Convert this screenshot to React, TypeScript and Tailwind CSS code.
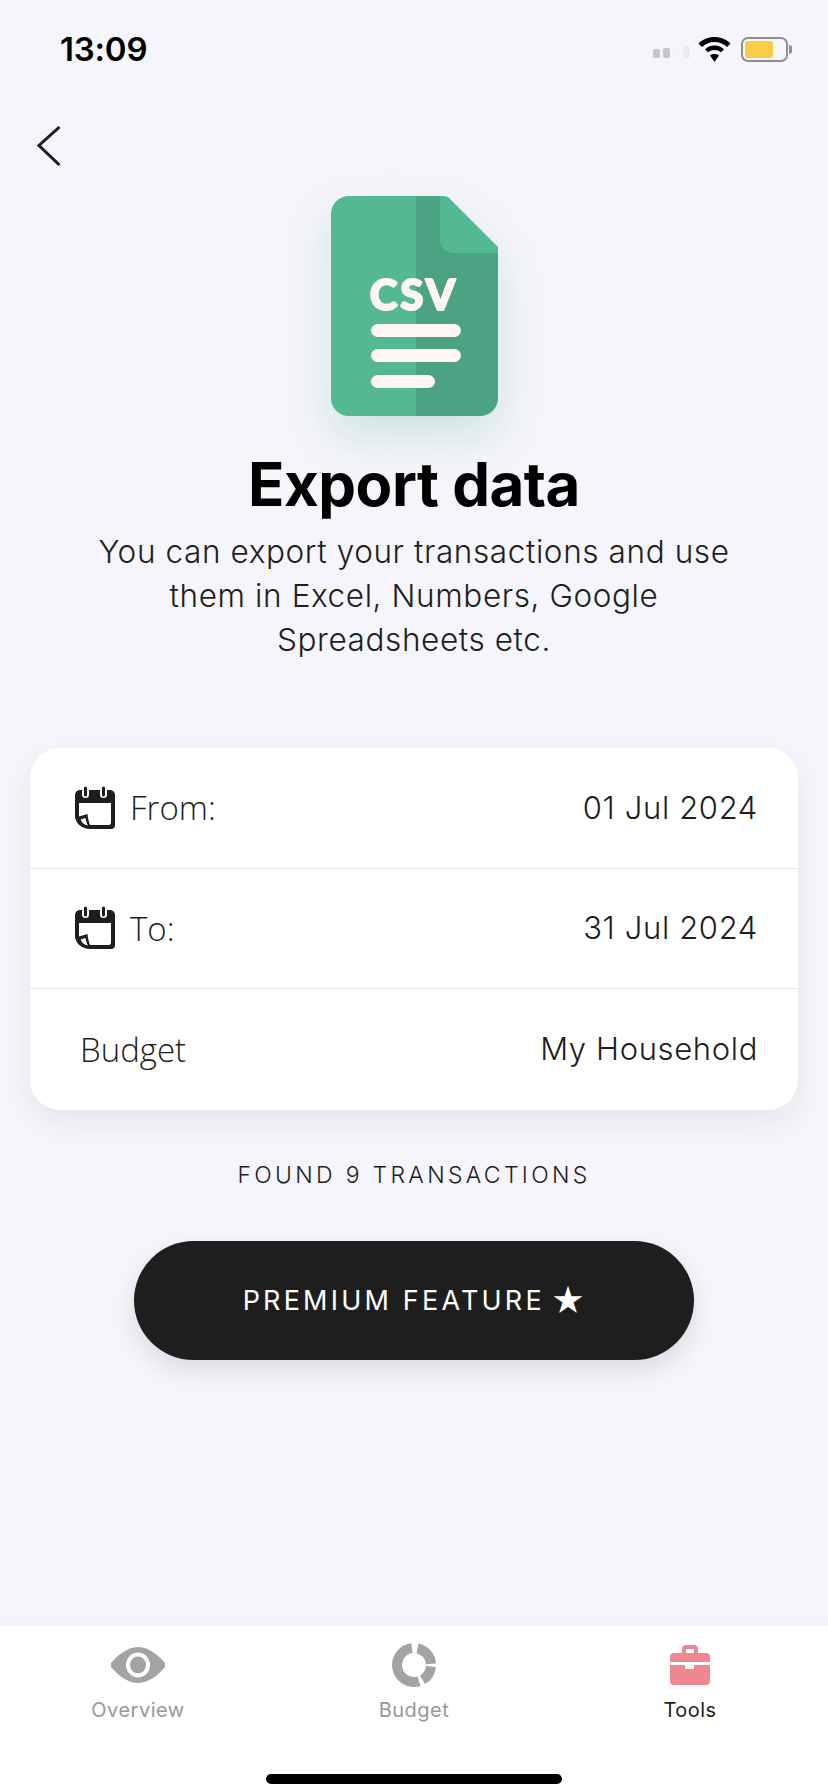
const DocIcon = () => (
    <svg width="167" height="220" viewBox="0 0 167 220" className="block">
        <path d="M18 0H85V220H18A18 18 0 0 1 0 202V18A18 18 0 0 1 18 0Z" fill="#54b892" />
        <path d="M85 0H113L167 55V202A18 18 0 0 1 149 220H85Z" fill="#4ba383" />
        <path d="M109 0H113C115 0 117 1 118 2L167 51V57H123A14 14 0 0 1 109 43Z" fill="#54b892" />
        <text
            x="83"
            y="114"
            textAnchor="middle"
            fill="#fff6f4"
            stroke="#fff6f4"
            strokeWidth="2"
            strokeLinejoin="round"
            fontFamily="Lato, sans-serif"
            fontWeight="900"
            fontSize="42"
            letterSpacing="3"
        >
            CSV
        </text>
        <rect x="40" y="128" width="90" height="13" rx="6.5" fill="#fff6f4" />
        <rect x="40" y="153" width="90" height="13" rx="6.5" fill="#fff6f4" />
        <rect x="40" y="179" width="64" height="13" rx="6.5" fill="#fff6f4" />
    </svg>
);

const CalendarIcon = () => (
    <svg width="40" height="44" viewBox="0 0 40 44" className="block shrink-0">
        <path d="M5 4H35A5 5 0 0 1 40 9V39A4 4 0 0 1 36 43H15C7 43 0 37 0 30V9A5 5 0 0 1 5 4Z" fill="#1e1e1e" />
        <path d="M4 17H36V36.500A2.500 2.500 0 0 1 33.500 39H15C14 36 13 33 12.500 28L4 30.500Z" fill="#ffffff" />
        <path d="M5.500 33.500L10.500 32C11 35 12 37.500 13 39.500C9.500 39 7 37 5.500 33.500Z" fill="#ffffff" />
        <rect x="7" y="0" width="7" height="12" rx="3.500" fill="#ffffff" />
        <rect x="9" y="0.500" width="3" height="10" rx="1.500" fill="#1e1e1e" />
        <rect x="25" y="0" width="7" height="12" rx="3.500" fill="#ffffff" />
        <rect x="27" y="0.500" width="3" height="10" rx="1.500" fill="#1e1e1e" />
    </svg>
);

const EyeIcon = () => (
    <svg width="54" height="36" viewBox="0 0 54 36" className="block">
        <path d="M27 0C38 0 48 9 54 16V20C48 27 38 36 27 36C16 36 6 27 0 20V16C6 9 16 0 27 0Z" fill="#a3a3a3" />
        <ellipse cx="27" cy="18" rx="12" ry="12.500" fill="#ffffff" />
        <ellipse cx="27" cy="18" rx="8" ry="8.500" fill="#a3a3a3" />
    </svg>
);

const DonutIcon = () => (
    <svg width="44" height="44" viewBox="0 0 44 44" className="block">
        <g fill="none" stroke="#a3a3a3" strokeWidth="10">
            <path d="M25.530 5.370A17 17 0 0 1 38.960 20.810" />
            <path d="M38.930 23.480A17 17 0 0 1 30.500 36.720" />
            <path d="M26.970 38.260A17 17 0 1 1 19.930 5.120" />
        </g>
    </svg>
);

const ToolsIcon = () => (
    <svg width="40" height="40" viewBox="0 0 40 40" className="block">
        <path d="M12 9V4A4 4 0 0 1 16 0H24A4 4 0 0 1 28 4V9H24V4H16V9Z" fill="#ee8791" />
        <path d="M4 8H36A4 4 0 0 1 40 12V17H0V12A4 4 0 0 1 4 8Z" fill="#ee8791" />
        <path d="M0 20H15V24H24V20H40V36A4 4 0 0 1 36 40H4A4 4 0 0 1 0 36Z" fill="#ee8791" />
    </svg>
);

const StatusIcons = () => (
    <div className="flex items-center">
        <svg width="38" height="12" viewBox="0 0 38 12" className="block mt-1">
            <rect x="0" y="3" width="7" height="9" rx="2" fill="#c6c6ca" />
            <rect x="10" y="2" width="7" height="10" rx="2" fill="#c6c6ca" />
            <rect x="20" y="1" width="7" height="11" rx="2" fill="#f4f4f8" />
            <rect x="30" y="0" width="7" height="12" rx="2" fill="#eaeaee" />
        </svg>
        <svg width="33" height="25" viewBox="0 0 33 25" className="block ml-[7px]">
            <path d="M16.500 0C23 0 28.500 2.500 32.500 6.500L29 10C26 7 21.500 5 16.500 5C11.500 5 7 7 4 10L0.500 6.500C4.500 2.500 10 0 16.500 0Z" fill="#000" />
            <path d="M16.500 8.500C20.500 8.500 23.500 10 26 12.300L23 15.300C21 13.700 19 13 16.500 13C14 13 12 13.700 10 15.300L7 12.300C9.500 10 12.500 8.500 16.500 8.500Z" fill="#000" />
            <path d="M16.500 17C18.500 17 20 17.500 21 18.500L16.500 25L12 18.500C13 17.500 14.500 17 16.500 17Z" fill="#000" />
        </svg>
        <div className="ml-[10px] flex items-center">
            <div className="h-[25px] w-[47px] rounded-[7px] border-2 border-[#8e8e92] p-[2px]">
                <div className="h-full w-[28px] rounded-[3px] bg-[#f8ce46]" />
            </div>
            <div className="ml-[1px] h-[9px] w-[3px] rounded-r-full bg-[#8e8e92]" />
        </div>
    </div>
);

const Row = ({ icon, label, value, last }: { icon?: boolean; label: string; value: string; last?: boolean }) => (
    <div className={`flex h-[120.5px] items-center justify-between pr-[40px] ${icon ? "pl-[45px]" : "pl-[50px]"} ${last ? "" : "border-b border-[#e9e9ec]"}`}>
        <div className="flex items-center gap-[15px]">
            {icon && <CalendarIcon />}
            <span className="font-['Open_Sans',sans-serif] text-[33px] font-light text-[#1e1e1e]">{label}</span>
        </div>
        <span className="font-['Inter',sans-serif] text-[31px] font-[350] tracking-[0.65px] text-[#1e1e1e]">{value}</span>
    </div>
);

const Tab = ({ label, active, children }: { label: string; active?: boolean; children: React.ReactNode }) => (
    <div className="flex flex-1 flex-col items-center">
        <div className="flex h-[46px] items-center justify-center">{children}</div>
        <span className={`mt-[10px] font-['Inter',sans-serif] text-[20px] leading-[24px] tracking-[0.5px] ${active ? "text-[#1e1e1e]" : "text-[#999999]"}`}>
            {label}
        </span>
    </div>
);

export default function App() {
    return (
        <div className="flex h-[1792px] w-[828px] flex-col overflow-hidden bg-[#f5f5fb] font-['Inter',sans-serif]">
            {/* Status bar */}
            <div className="flex h-[62px] items-end justify-between pl-[60px] pr-[36px]">
                <span className="-mb-[4px] text-[33px] font-semibold leading-[33px] tracking-[-0.2px] text-black">13:09</span>
                <StatusIcons />
            </div>

            {/* Back */}
            <div className="mt-[64px] pl-[37px]">
                <svg width="24" height="40" viewBox="0 0 24 40" className="block">
                    <path d="M22.500 1L2 19.500L22.500 39" fill="none" stroke="#1e1e1e" strokeWidth="3" />
                </svg>
            </div>

            <div className="mt-[30px] flex flex-col items-center">
                <div className="drop-shadow-[0_20px_22px_rgba(75,163,131,0.22)]">
                    <DocIcon />
                </div>
                <h1 className="mt-[32px] text-[60px] font-bold leading-[72px] tracking-[-0.5px] text-black">Export data</h1>
                <p className="mt-[10px] w-[670px] text-center text-[31.5px] font-[350] leading-[44px] tracking-[0.6px] text-[#1e1e1e]">
                    You can export your transactions and use them in Excel, Numbers, Google Spreadsheets etc.
                </p>
            </div>

            {/* Date range card */}
            <div className="mx-[30px] mt-[86px] rounded-[30px] bg-white shadow-[0_12px_30px_rgba(30,30,60,0.07)]">
                <Row icon label="From:" value="01 Jul 2024" />
                <Row icon label="To:" value="31 Jul 2024" />
                <Row label="Budget" value="My Household" last />
            </div>

            <p className="mt-[51px] text-center text-[23px] font-[350] leading-[28px] tracking-[3.3px] text-[#1e1e1e]">FOUND 9 TRANSACTIONS</p>

            <div className="mt-[52px] flex justify-center">
                <button className="flex h-[119px] w-[560px] items-center justify-center rounded-full bg-[#1e1e1e] pt-[3px] text-[27px] tracking-[3.2px] text-white shadow-[0_10px_24px_rgba(30,30,60,0.12)]">
                    PREMIUM FEATURE
                    <span className="ml-[6px] text-[33px] leading-none tracking-normal">★</span>
                </button>
            </div>

            <div className="flex-1" />

            {/* Tab bar */}
            <div className="h-[166px] bg-white pt-[16px] shadow-[0_-6px_14px_rgba(30,30,60,0.02)]">
                <div className="flex">
                    <Tab label="Overview">
                        <EyeIcon />
                    </Tab>
                    <Tab label="Budget">
                        <DonutIcon />
                    </Tab>
                    <Tab label="Tools" active>
                        <ToolsIcon />
                    </Tab>
                </div>
                <div className="mx-auto mt-[52px] h-[10px] w-[296px] rounded-full bg-black" />
            </div>
        </div>
    );
}
